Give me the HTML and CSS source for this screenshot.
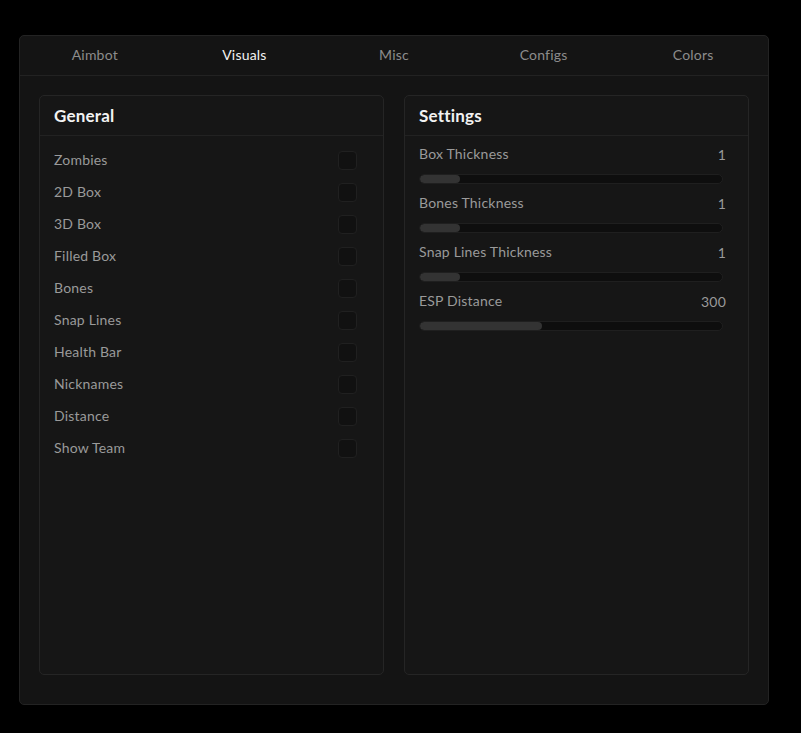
FILE: index.html
```html
<!DOCTYPE html>
<html lang="en">
<head>
    <meta charset="UTF-8">
    <title>Menu - Visuals</title>
    <link rel="stylesheet" href="styles.css">
</head>
<body>

<div class="window">
    <div class="tabs">
        <div class="tab">Aimbot</div>
        <div class="tab active">Visuals</div>
        <div class="tab">Misc</div>
        <div class="tab">Configs</div>
        <div class="tab">Colors</div>
    </div>

    <div class="content">
        <div class="panel">
            <div class="panel-header">General</div>
            <div class="panel-body">
                <div class="check-row"><span>Zombies</span><div class="checkbox"></div></div>
                <div class="check-row"><span>2D Box</span><div class="checkbox"></div></div>
                <div class="check-row"><span>3D Box</span><div class="checkbox"></div></div>
                <div class="check-row"><span>Filled Box</span><div class="checkbox"></div></div>
                <div class="check-row"><span>Bones</span><div class="checkbox"></div></div>
                <div class="check-row"><span>Snap Lines</span><div class="checkbox"></div></div>
                <div class="check-row"><span>Health Bar</span><div class="checkbox"></div></div>
                <div class="check-row"><span>Nicknames</span><div class="checkbox"></div></div>
                <div class="check-row"><span>Distance</span><div class="checkbox"></div></div>
                <div class="check-row"><span>Show Team</span><div class="checkbox"></div></div>
            </div>
        </div>

        <div class="panel">
            <div class="panel-header">Settings</div>
            <div class="panel-body sliders">
                <div class="slider-row">
                    <div class="slider-top"><span>Box Thickness</span><span class="value">1</span></div>
                    <div class="track"><div class="fill" style="width: 40px"></div></div>
                </div>
                <div class="slider-row">
                    <div class="slider-top"><span>Bones Thickness</span><span class="value">1</span></div>
                    <div class="track"><div class="fill" style="width: 40px"></div></div>
                </div>
                <div class="slider-row">
                    <div class="slider-top"><span>Snap Lines Thickness</span><span class="value">1</span></div>
                    <div class="track"><div class="fill" style="width: 40px"></div></div>
                </div>
                <div class="slider-row">
                    <div class="slider-top"><span>ESP Distance</span><span class="value">300</span></div>
                    <div class="track"><div class="fill" style="width: 122px"></div></div>
                </div>
            </div>
        </div>
    </div>
</div>

</body>
</html>
```

FILE: styles.css
```css
body {
    margin: 0;
    background-color: #000;
    font-family: Lato, "Open Sans", sans-serif;
    font-size: 14px;
    letter-spacing: 0.2px;
    color: #9a9a9a;
}
.window {
    margin: 35px 0 0 19px;
    width: 748px;
    height: 668px;
    background-color: #141414;
    border: 1px solid #232323;
    border-radius: 5px;
    display: flex;
    flex-direction: column;
}
.tabs {
    display: flex;
    height: 39px;
    border-bottom: 1px solid #222;
}
.tab {
    flex: 1;
    display: flex;
    align-items: center;
    justify-content: center;
    padding-bottom: 2px;
    color: #8c8c8c;
}
.tab.active {
    color: #f2f2f2;
}
.content {
    flex: 1;
    display: flex;
    gap: 20px;
    padding: 19px 19px 29px 19px;
}
.panel {
    flex: 1;
    background-color: #161616;
    border: 1px solid #252525;
    border-radius: 5px;
    display: flex;
    flex-direction: column;
}
.panel-header {
    box-sizing: border-box;
    height: 40px;
    border-bottom: 1px solid #222;
    display: flex;
    align-items: center;
    padding-left: 14px;
    padding-bottom: 1px;
    font-size: 17px;
    font-weight: bold;
    color: #f2f2f2;
}
.panel-body {
    padding: 8px 26px 0 14px;
}
.check-row {
    height: 32px;
    display: flex;
    align-items: center;
    justify-content: space-between;
}
.check-row span {
    padding-bottom: 2px;
}
.checkbox {
    width: 17px;
    height: 17px;
    background-color: #111;
    border: 1px solid #202020;
    border-radius: 4px;
}
.sliders {
    padding: 8px 22px 0 14px;
}
.slider-row {
    height: 49px;
}
.slider-top {
    height: 19px;
    display: flex;
    justify-content: space-between;
    align-items: flex-end;
}
.slider-top span:first-child {
    padding-bottom: 1px;
}
.value {
    padding-top: 4px;
}
.track {
    margin: 11px 3px 0 0;
    height: 8px;
    background-color: #0e0e0e;
    border: 1px solid #1f1f1f;
    border-radius: 5px;
    overflow: hidden;
}
.fill {
    height: 100%;
    background-color: #333;
    border-radius: 5px;
}
```
